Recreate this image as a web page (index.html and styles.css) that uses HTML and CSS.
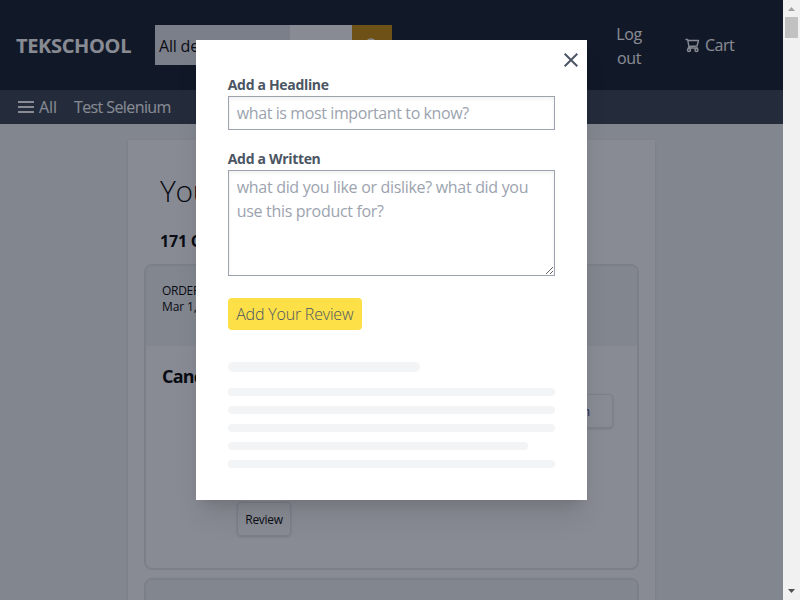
FILE: index.html
```
<!DOCTYPE html>
<html lang="en">
<head>
<meta charset="utf-8">
<title>TEKSCHOOL</title>
<link rel="stylesheet" href="styles.css">
</head>
<body>
<div class="window">
  <div class="page">
    <header class="topnav">
      <div class="logo">TEKSCHOOL</div>
      <div class="search">
        <div class="search-select">All departments</div>
        <div class="search-input"></div>
        <div class="search-button">
          <svg width="16" height="16" viewBox="0 0 16 16" fill="none" stroke="#fff" stroke-width="1.6"><circle cx="7" cy="7" r="5"/><path d="M10.5 10.500 15 15"/></svg>
        </div>
      </div>
      <nav class="links">
        <span class="orders">Orders</span>
        <span class="logout">Log<br>out</span>
        <span class="cart">
          <svg width="15" height="15" viewBox="0 0 15 15" fill="none" stroke="#fff" stroke-width="1.4" stroke-linecap="round" stroke-linejoin="round"><path d="M1 1.500h1.700l1.300 8M3 2.500h10.500l-1.500 5.500-8.200.5M3.200 10h9.300"/><circle cx="4" cy="12" r="1.500"/><circle cx="11.500" cy="12" r="1.500"/></svg>
          <span>Cart</span>
        </span>
      </nav>
    </header>
    <div class="subnav">
      <svg width="16" height="12" viewBox="0 0 16 12" fill="#fff"><path d="M0 0h16v2H0zM0 5h16v2H0zM0 10h16v2H0z"/></svg>
      <span class="all">All</span>
      <span class="test">Test Selenium</span>
    </div>
    <main class="content">
      <h1>Your Orders</h1>
      <h2>171 Orders</h2>
      <section class="order">
        <div class="order-head">
          <div class="placed">ORDER PLACED</div>
          <div class="date">Mar 1, 2023</div>
        </div>
        <div class="order-body">
          <h3>Cancelled</h3>
          <div class="row-right"><button class="small again">Buy Again</button></div>
          <div class="row-left"><button class="small review">Review</button></div>
        </div>
      </section>
      <section class="order"><div class="order-head"></div></section>
    </main>
  </div>
  <div class="scrollbar">
    <svg width="17" height="17" viewBox="0 0 17 17" fill="#a3a3a3"><path d="M5 11h7L8.500 7z"/></svg>
    <div class="thumb"></div>
    <svg class="down" width="17" height="17" viewBox="0 0 17 17" fill="#505050"><path d="M5 6h7l-3.500 4z"/></svg>
  </div>
  <div class="overlay">
    <div class="modal">
      <svg class="close" width="14" height="14" viewBox="0 0 14 14" stroke="#4b5563" stroke-width="2" fill="none"><path d="M.7.7l12.600 12.600M13.300.7.7 13.300"/></svg>
      <label for="headline">Add a Headline</label>
      <input id="headline" placeholder="what is most important to know?">
      <label for="written">Add a Written</label>
      <textarea id="written" placeholder="what did you like or dislike? what did you use this product for?"></textarea>
      <button class="submit">Add Your Review</button>
      <div class="skeleton">
        <div class="bar title"></div>
        <div class="bar"></div>
        <div class="bar"></div>
        <div class="bar"></div>
        <div class="bar short"></div>
        <div class="bar"></div>
      </div>
    </div>
  </div>
</div>
</body>
</html>
```
FILE: styles.css
```
* { box-sizing: border-box; margin: 0; padding: 0; }
body { width: 800px; height: 600px; overflow: hidden; font: 16px/24px "Open Sans", "Noto Sans", sans-serif; color: #000; }
input, textarea, button { font: inherit; letter-spacing: inherit; display: block; }
svg { display: block; flex: none; }
.window { position: relative; display: flex; width: 800px; height: 600px; overflow: hidden; }
.page { width: 783px; height: 600px; overflow: hidden; background: #f3f4f6; }

.topnav { display: flex; align-items: center; height: 90px; padding-left: 16px; background: #111827; color: #fff; }
.logo { width: 139px; padding-top: 2px; font-size: 20px; line-height: 28px; font-weight: 700; letter-spacing: -.35px; }
.search { display: flex; width: 237px; height: 40px; color: #000; }
.search-select { width: 135px; padding: 9px 4px; background: #e5e7eb; white-space: nowrap; letter-spacing: -.2px; overflow: hidden; }
.search-input { width: 62px; background: #fff; }
.search-button { display: flex; width: 40px; align-items: center; justify-content: center; background: #ca8a04; }
.links { display: flex; align-items: center; margin-left: 132px; letter-spacing: -.35px; }
.orders { width: 92px; padding-top: 1px; }
.logout { width: 26px; padding-top: 1px; text-align: center; }
.cart { display: flex; align-items: center; gap: 5px; margin-left: 43px; letter-spacing: -.5px; }

.subnav { display: flex; align-items: center; height: 34px; padding-left: 18px; background: #374151; color: #fff; }
.all { width: 35px; margin-left: 5px; letter-spacing: -.1px; }
.test { letter-spacing: -.6px; }

.content { width: 527px; height: 600px; margin: 16px 0 0 128px; padding: 32px 16px 0 16px; background: #fff; box-shadow: 0 1px 3px rgba(0,0,0,.1); }
h1 { padding-left: 16px; font-size: 30px; line-height: 38px; font-weight: 300; letter-spacing: -.4px; }
h2 { margin: 18px 0 10px; padding-left: 16px; font-size: 16px; line-height: 26px; font-weight: 700; letter-spacing: -.2px; }
.order { width: 494.500px; height: 306px; margin-bottom: 8px; border: 2px solid #e5e7eb; border-radius: 8px; overflow: hidden; }
.order-head { height: 80px; padding: 17px 16px; background: #f3f4f6; font-size: 12px; line-height: 16px; letter-spacing: -.1px; }
.placed { letter-spacing: -.3px; }
.order-body { padding: 16px 24px 0 16px; }
h3 { font-size: 18px; line-height: 28px; font-weight: 700; letter-spacing: -.8px; }
.row-right { display: flex; justify-content: flex-end; margin-top: 4px; }
.row-left { padding-left: 75px; margin-top: 74px; }
.small { height: 34px; padding-top: 1px; border: 1px solid #e5e7eb; border-radius: 4px; background: #fff; box-shadow: 0 1px 3px rgba(0,0,0,.15); font-size: 12px; line-height: 16px; }
.again { width: 100px; color: #312e81; }
.review { width: 54px; letter-spacing: -.3px; }

.scrollbar { width: 17px; display: flex; flex-direction: column; background: #f1f1f1; }
.thumb { width: 13px; height: 21px; margin-left: 2px; background: #c1c1c1; }
.down { margin-top: auto; }

.overlay { position: absolute; left: 0; top: 0; display: flex; justify-content: center; align-items: flex-start; width: 783px; height: 600px; padding-top: 40px; background: rgba(17,24,39,.5); }
.modal { position: relative; width: 391.500px; height: 460px; padding: 35px 32px 32px; background: #fff; box-shadow: 0 20px 25px -5px rgba(0,0,0,.1), 0 8px 10px -6px rgba(0,0,0,.1); }
.close { position: absolute; right: 9px; top: 13px; }
label { display: block; height: 21px; color: #4b5563; font-size: 14px; line-height: 20px; font-weight: 700; letter-spacing: -.32px; }
input, textarea { width: 100%; padding: 4px 8px; border: 1px solid #9ca3af; border-radius: 0; outline: 0; background: #fff; box-shadow: inset 0 2px 4px rgba(0,0,0,.06); letter-spacing: -.4px; }
input { height: 34px; margin-bottom: 19px; }
textarea { height: 106px; resize: both; overflow: hidden; letter-spacing: -.31px; }
::placeholder { color: #9ca3af; opacity: 1; }
.submit { width: 134px; height: 32px; margin-top: 22px; border: 0; border-radius: 4px; background: #fde047; color: #4b5563; font-weight: 350; white-space: nowrap; letter-spacing: -.2px; }
.skeleton { margin-top: 32px; }
.bar { height: 8px; margin-bottom: 10px; border-radius: 4px; background: #f3f4f6; }
.title { width: 192px; height: 10px; margin-bottom: 16px; border-radius: 5px; }
.short { width: 300px; }
```
